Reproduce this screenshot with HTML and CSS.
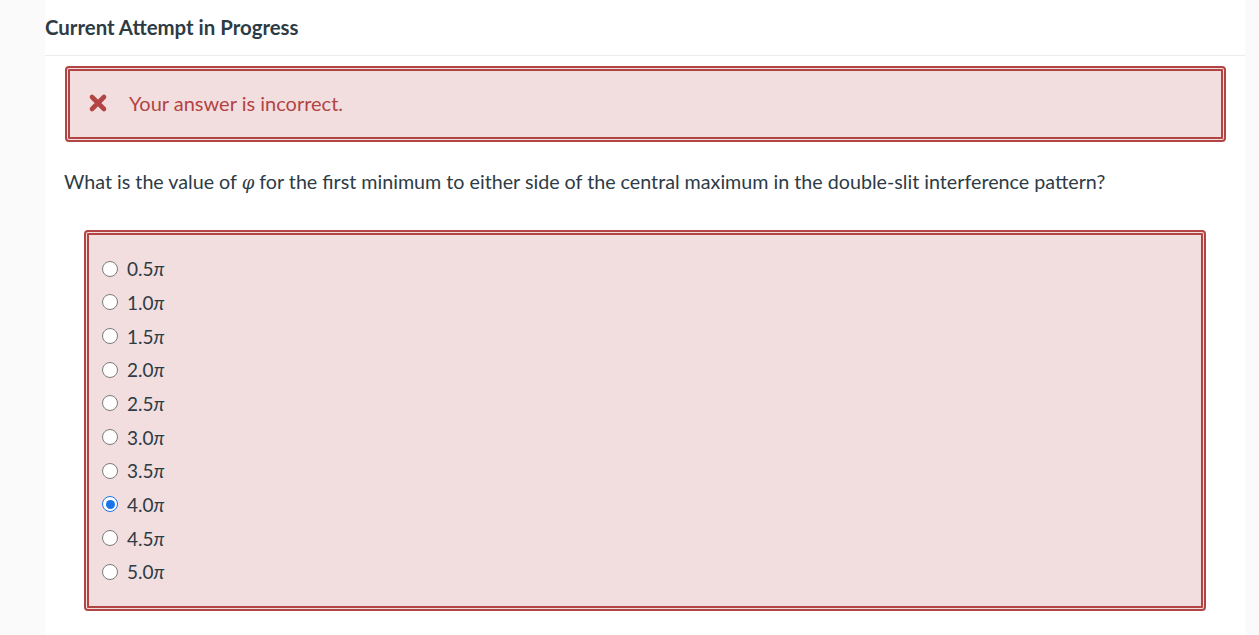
FILE: index.html
```html
<!DOCTYPE html>
<html lang="en">
<head>
<meta charset="utf-8">
<title>Current Attempt in Progress</title>
<link rel="stylesheet" href="styles.css">
</head>
<body>
<div class="page">
  <div class="gutter"></div>
  <main class="main">
    <h2 class="title">Current Attempt in Progress</h2>
    <div class="feedback">
      <svg class="xicon" viewBox="0 0 20 20" width="20" height="20" aria-hidden="true">
        <path d="M4 4 L16 16 M16 4 L4 16" stroke="#b24444" stroke-width="4.6" stroke-linecap="round"/>
      </svg>
      <span class="feedback-text">Your answer is incorrect.</span>
    </div>
    <p class="question">What is the value of <i class="phi">φ</i> for the first minimum to either side of the central maximum in the double-slit interference pattern?</p>
    <div class="answers">
      <label class="opt"><span class="radio"></span><span>0.5<i class="pi">π</i></span></label>
      <label class="opt"><span class="radio"></span><span>1.0<i class="pi">π</i></span></label>
      <label class="opt"><span class="radio"></span><span>1.5<i class="pi">π</i></span></label>
      <label class="opt"><span class="radio"></span><span>2.0<i class="pi">π</i></span></label>
      <label class="opt"><span class="radio"></span><span>2.5<i class="pi">π</i></span></label>
      <label class="opt"><span class="radio"></span><span>3.0<i class="pi">π</i></span></label>
      <label class="opt"><span class="radio"></span><span>3.5<i class="pi">π</i></span></label>
      <label class="opt"><span class="radio checked"></span><span>4.0<i class="pi">π</i></span></label>
      <label class="opt"><span class="radio"></span><span>4.5<i class="pi">π</i></span></label>
      <label class="opt"><span class="radio"></span><span>5.0<i class="pi">π</i></span></label>
    </div>
  </main>
  <div class="gutter-right"></div>
</div>
</body>
</html>
```

FILE: styles.css
```css
html, body {
  margin: 0;
  padding: 0;
  background: #fafafa;
}
.page {
  display: flex;
  min-height: 635px;
  font-family: Lato, "Open Sans", sans-serif;
  color: #2d3b45;
}
.gutter {
  width: 45px;
  flex: none;
  background: #fafafa;
}
.gutter-right {
  flex: 1;
  background: #fafafa;
}
.main {
  width: 1200px;
  flex: none;
  background: #fff;
  min-height: 635px;
}
.title {
  margin: 0;
  padding: 14px 0 15px 0;
  font-size: 20.4px;
  line-height: 26px;
  font-weight: 700;
  color: #2d3b45;
  border-bottom: 1px solid #ececec;
}
.feedback {
  margin: 10px 19px 0 20px;
  height: 64px;
  border: 5px double #b24444;
  border-radius: 4px;
  background: #f2dedf;
  display: flex;
  align-items: center;
  padding-left: 18px;
  padding-bottom: 2px;
  box-sizing: content-box;
}
.xicon {
  flex: none;
  width: 20px;
  height: 20px;
}
.feedback-text {
  margin-left: 21px;
  font-size: 20px;
  color: #b24444;
}
.question {
  margin: 27px 0 0 19px;
  font-size: 19.7px;
  line-height: 26px;
  color: #2d3b45;
}
.phi {
  font-family: "DejaVu Serif", serif;
  font-style: italic;
  font-size: 18px;
}
.answers {
  margin: 34px 39px 0 39px;
  height: 381px;
  border: 5px double #b24444;
  border-radius: 4px;
  background: #f2dedf;
  padding: 17px 0 0 13px;
  box-sizing: border-box;
  display: flex;
  flex-direction: column;
}
.opt {
  display: flex;
  align-items: center;
  height: 33.67px;
  font-size: 19px;
  color: #2d3b45;
}
.radio {
  width: 14px;
  height: 14px;
  border: 1px solid #7b7b7b;
  border-radius: 50%;
  background: #fff;
  margin-right: 9px;
  flex: none;
  box-sizing: content-box;
}
.radio.checked {
  border-color: #1a73e8;
  background: #fff;
  position: relative;
}
.radio.checked::after {
  content: "";
  position: absolute;
  left: 2.5px;
  top: 2.5px;
  width: 9px;
  height: 9px;
  border-radius: 50%;
  background: #1a73e8;
}
.pi {
  font-style: italic;
}
```
